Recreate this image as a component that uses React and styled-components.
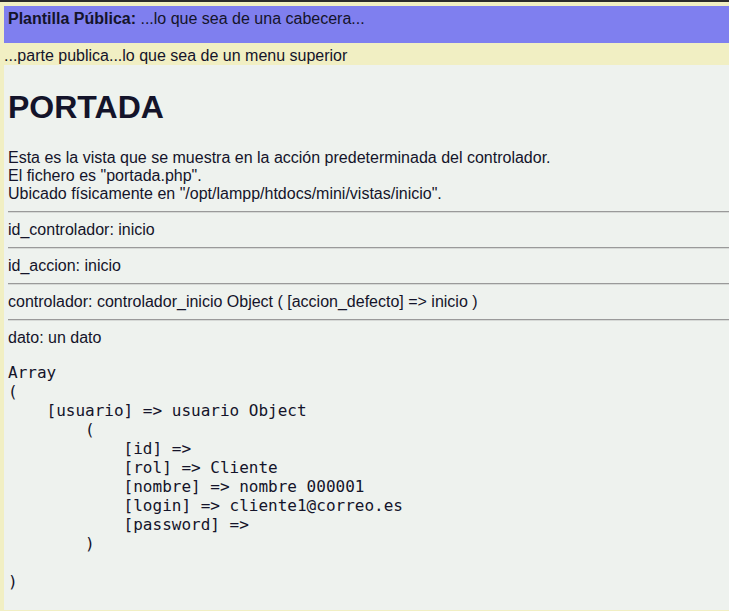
import React from "react"
import styled, { createGlobalStyle } from "styled-components"

const Global = createGlobalStyle`
  html {
    background: #f1efc3;
  }
  body {
    margin: 0;
    padding: 4px 0 0 4px;
    border-top: 2px solid #2b2b2b;
    font-family: "Liberation Sans", Arial, sans-serif;
    font-size: 16px;
    color: #14142a;
  }
`

const Cabecera = styled.header`
  background: #7f7fef;
  height: 37px;
  box-sizing: border-box;
  padding: 4px 4px 0;

  b {
    font-weight: bold;
  }
`

const Menu = styled.nav`
  padding: 4px 0 0;
`

const Contenido = styled.main`
  display: flow-root;
  background: #eef2ee;
  padding: 0 0 3px 4px;

  h1 {
    font-size: 32px;
    margin: 24px 0 23px;
  }

  hr {
    margin: 8px 0;
    border: 0;
    border-top: 1px solid #9a9a9a;
    border-bottom: 1px solid #d6d9d6;
  }

  pre {
    font-family: "DejaVu Sans Mono", monospace;
    font-size: 16px;
    line-height: 19px;
    margin: 16px 0;
  }
`

const datos = `Array
(
    [usuario] => usuario Object
        (
            [id] => 
            [rol] => Cliente
            [nombre] => nombre 000001
            [login] => cliente1@correo.es
            [password] => 
        )

)`

const App = () => (
  <>
    <Global />
    <Cabecera>
      <b>Plantilla Pública:</b> ...lo que sea de una cabecera...
    </Cabecera>
    <Menu>...parte publica...lo que sea de un menu superior</Menu>
    <Contenido>
      <h1>PORTADA</h1>
      <div>
        Esta es la vista que se muestra en la acción predeterminada del controlador.<br />
        El fichero es "portada.php".<br />
        Ubicado físicamente en "/opt/lampp/htdocs/mini/vistas/inicio".
      </div>
      <hr />
      <div>id_controlador: inicio</div>
      <hr />
      <div>id_accion: inicio</div>
      <hr />
      <div>controlador: controlador_inicio Object ( [accion_defecto] =&gt; inicio )</div>
      <hr />
      <div>dato: un dato</div>
      <pre>{datos}</pre>
    </Contenido>
  </>
)

export default App
